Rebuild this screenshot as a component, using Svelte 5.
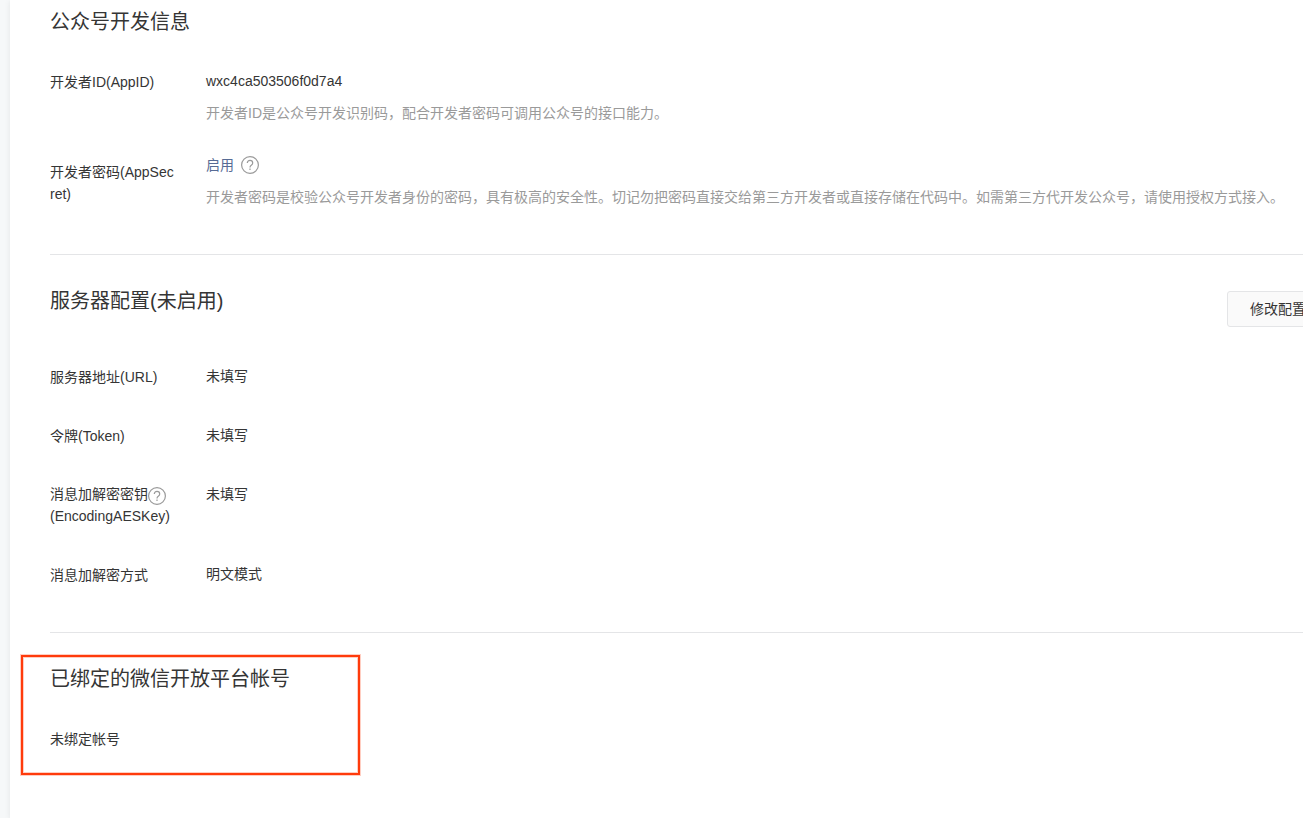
<script>
  const appId = 'wxc4ca503506f0d7a4';

  const serverConfig = [
    { label: '服务器地址(URL)', value: '未填写' },
    { label: '令牌(Token)', value: '未填写' },
    { label: '消息加解密密钥', sub: '(EncodingAESKey)', value: '未填写' },
    { label: '消息加解密方式', value: '明文模式' }
  ];
</script>

{#snippet helpIcon()}
  <svg class="help-icon" viewBox="0 0 18 18" aria-hidden="true">
    <circle cx="9" cy="9" r="8.4" />
    <path d="M6.3 7.1C6.3 5.400 7.400 4.400 9 4.400s2.700 1 2.700 2.500c0 1.100-.7 1.700-1.500 2.400C9.300 10 9 10.400 9 11.500" />
    <path d="M9 12.600v1.300" />
  </svg>
{/snippet}

<div class="page">
  <main class="panel">
    <section class="info">
      <h2>公众号开发信息</h2>
      <dl>
        <div class="row">
          <dt>开发者ID(AppID)</dt>
          <dd>
            {appId}
            <p class="desc">开发者ID是公众号开发识别码，配合开发者密码可调用公众号的接口能力。</p>
          </dd>
        </div>
        <div class="row">
          <dt class="middle">开发者密码(AppSecret)</dt>
          <dd>
            <div class="action">
              <a href="#enable">启用</a>
              <button class="help" aria-label="帮助">{@render helpIcon()}</button>
            </div>
            <p class="desc">开发者密码是校验公众号开发者身份的密码，具有极高的安全性。切记勿把密码直接交给第三方开发者或直接存储在代码中。如需第三方代开发公众号，请使用授权方式接入。</p>
          </dd>
        </div>
      </dl>
    </section>

    <section class="server">
      <header>
        <h2>服务器配置(未启用)</h2>
        <button class="btn">修改配置</button>
      </header>
      <dl>
        {#each serverConfig as item}
          <div class="row">
            <dt class:double={item.sub}>
              {#if item.sub}
                <span class="with-help">{item.label}<button class="help" aria-label="帮助">{@render helpIcon()}</button></span>
                {item.sub}
              {:else}
                {item.label}
              {/if}
            </dt>
            <dd>{item.value}</dd>
          </div>
        {/each}
      </dl>
    </section>

    <section class="bound">
      <div class="highlight"></div>
      <h2>已绑定的微信开放平台帐号</h2>
      <p>未绑定帐号</p>
    </section>
  </main>
</div>

<style>
  :global(body) {
    background: #f6f8f9;
    overflow: hidden;
  }

  .page {
    padding-left: 10px;
    color: #353535;
    font-family: "Liberation Sans", "Noto Sans CJK SC", sans-serif;
    font-size: 14px;
    line-height: 22px;
  }

  /* the panel runs past the right edge of the window */
  .panel {
    box-sizing: border-box;
    min-height: 100vh;
    margin-right: -64px;
    padding: 6px 40px 0;
    background: #fff;
    box-shadow: 0 1px 6px rgba(0, 0, 0, 0.08);
  }

  h2,
  p,
  dl,
  dd {
    margin: 0;
  }

  h2 {
    font-size: 20px;
    font-weight: 400;
    line-height: 32px;
  }

  .info {
    padding-bottom: 46px;
  }

  .info dl {
    display: flex;
    flex-direction: column;
    gap: 30px;
    margin-top: 32px;
  }

  .row {
    display: flex;
    gap: 30px;
  }

  dt {
    flex: none;
    width: 126px;
    padding-top: 1px;
    word-break: break-all;
  }

  dt.middle {
    padding-top: 7px;
  }

  dt.double {
    padding-top: 0;
  }

  dd {
    flex: 1;
  }

  .desc {
    margin-top: 10px;
    color: #9a9a9a;
  }

  .action {
    display: flex;
    align-items: center;
    gap: 7px;
    height: 22px;
  }

  a {
    color: #576b95;
    text-decoration: none;
  }

  .help {
    display: block;
    padding: 0;
    border: 0;
    background: none;
    cursor: pointer;
  }

  .help-icon {
    display: block;
    width: 18px;
    height: 18px;
    fill: none;
    stroke: #9a9a9a;
    stroke-width: 1.2;
  }

  .with-help {
    display: flex;
    align-items: flex-end;
    height: 22px;
  }

  .server,
  .bound {
    padding-top: 30px;
    border-top: 1px solid #e4e5e7;
  }

  .server {
    padding-bottom: 46px;
  }

  .server header {
    display: flex;
    justify-content: space-between;
    align-items: flex-start;
  }

  .server dl {
    display: flex;
    flex-direction: column;
    gap: 36px;
    margin-top: 38px;
  }

  .btn {
    height: 36px;
    margin-top: 6px;
    padding: 0 22px;
    border: 1px solid #e4e5e7;
    border-radius: 3px;
    background: #fafafa;
    color: #353535;
    font: inherit;
    cursor: pointer;
  }

  .panel {
    padding-right: 38px;
  }

  .bound {
    position: relative;
  }

  .bound p {
    margin-top: 33px;
  }

  .highlight {
    position: absolute;
    top: 22px;
    left: -29px;
    box-sizing: border-box;
    width: 339px;
    height: 120px;
    border: 2px solid #ff3b0c;
    box-shadow: 0 0 0 1px rgba(255, 59, 12, 0.25), inset 0 0 0 1px rgba(255, 59, 12, 0.25);
    pointer-events: none;
  }
</style>
